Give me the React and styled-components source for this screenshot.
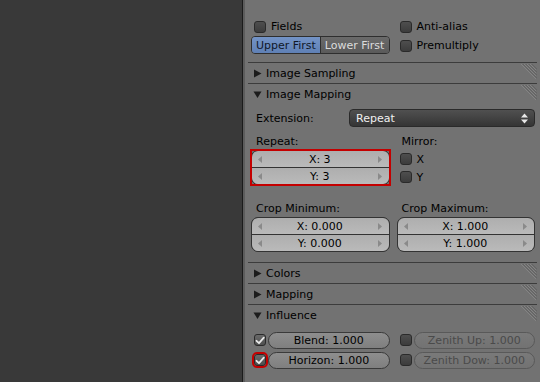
import React from 'react';
import styled, { createGlobalStyle, css } from 'styled-components';

const Global = createGlobalStyle`
  html, body { margin: 0; padding: 0; background: #393939; }
  body {
    font-family: "DejaVu Sans", "Liberation Sans", sans-serif;
    font-size: 11px;
    color: #000;
  }
`;

const Page = styled.div`
  display: flex;
  width: 540px;
  height: 382px;
  overflow: hidden;
`;

const SideArea = styled.div`
  flex: none;
  width: 242px;
  background: #393939;
`;

const Divider = styled.div`
  flex: none;
  width: 3px;
  box-sizing: border-box;
  border-left: 1px solid #1b1b1b;
  background: #5c5c5c;
`;

const Panel = styled.div`
  flex: 1;
  display: flex;
  flex-direction: column;
  background: #727272;
  overflow: hidden;
`;

const TwoCol = styled.div`
  display: grid;
  grid-template-columns: 1fr 1fr;
  column-gap: 7px;
  padding: ${p => p.$pad || '0 5px 0 6px'};
`;

const Col = styled.div`
  display: flex;
  flex-direction: column;
`;

const CheckRow = styled.div`
  display: flex;
  align-items: center;
  gap: 5px;
  height: ${p => p.$h || 19}px;
  padding-left: 3px;
`;

const Box = styled.span`
  position: relative;
  flex: none;
  box-sizing: border-box;
  width: 12px;
  height: 12px;
  border-radius: 3px;
  border: 1px solid #2a2a2a;
  background: ${p => (p.$checked ? 'linear-gradient(#6a6a6a, #4f4f4f)' : 'linear-gradient(#4e4e4e, #3c3c3c)')};
  display: flex;
  align-items: center;
  justify-content: center;
  ${p => p.$marked && css`
    outline: 2px solid #c40000;
    outline-offset: 0px;
  `}
`;

const Text = styled.span`
  white-space: nowrap;
  color: #000;
`;

const Segmented = styled.div`
  display: flex;
  height: 18px;
  box-sizing: border-box;
  border: 1px solid #2e2e2e;
  border-radius: 4px;
  overflow: hidden;
`;

const SegButton = styled.div`
  flex: 1;
  display: flex;
  align-items: center;
  justify-content: center;
  white-space: nowrap;
  background: ${p => (p.$active ? 'linear-gradient(#7393c6, #5f80b5)' : 'linear-gradient(#6a6a6a, #5a5a5a)')};
  color: ${p => (p.$active ? '#101828' : '#dcdcdc')};
  & + & { border-left: 1px solid #2e2e2e; }
`;

const Header = styled.div`
  flex: none;
  display: flex;
  align-items: center;
  height: 20px;
  margin: 0 3px;
  padding-left: 5px;
  border-top: 1px solid #3c3c3c;
  gap: 4px;
`;

const HeaderTitle = styled.span`
  flex: 1;
  font-size: 11px;
  color: #000;
`;

const Body = styled.div`
  display: flex;
  flex-direction: column;
  padding: ${p => p.$pad || '0'};
`;

const FieldLine = styled.div`
  display: flex;
  align-items: center;
  height: 18px;
  padding: 0 5px 0 6px;
`;

const LabelText = styled.span`
  flex: 1;
  padding-left: 5px;
  color: #000;
  white-space: nowrap;
`;

const Dropdown = styled.div`
  flex: none;
  width: 186px;
  height: 18px;
  box-sizing: border-box;
  border: 1px solid #2a2a2a;
  border-radius: 4px;
  background: linear-gradient(#505050, #353535);
  color: #f0f0f0;
  display: flex;
  align-items: center;
  padding: 0 6px;
  justify-content: space-between;
`;

const ColLabel = styled.div`
  height: ${p => p.$h || 18}px;
  display: flex;
  align-items: center;
  padding-left: 5px;
  white-space: nowrap;
`;

const Marker = styled.div`
  ${p => p.$marked && css`
    outline: 2px solid #c40000;
    outline-offset: -1px;
  `}
`;

const NumStack = styled.div`
  display: flex;
  flex-direction: column;
  box-sizing: border-box;
  border: 1px solid #333;
  border-radius: 7px;
  overflow: hidden;
  background: #333;
  gap: 1px;
`;

const NumField = styled.div`
  height: 16px;
  display: flex;
  align-items: center;
  justify-content: space-between;
  padding: 0 7px 0 6px;
  background: linear-gradient(#aeaeae, #bababa);
  color: #000;
`;

const NumValue = styled.span`
  flex: 1;
  text-align: center;
`;

const ToggleRow = styled.div`
  display: flex;
  align-items: center;
  height: 20px;
  gap: 2px;
  padding-left: 3px;
`;

const Pill = styled.div`
  flex: 1;
  height: 17px;
  box-sizing: border-box;
  border-radius: 9px;
  display: flex;
  align-items: center;
  justify-content: center;
  white-space: nowrap;
  ${p => p.$disabled ? css`
    border: 1px solid #595959;
    background: linear-gradient(#7a7a7a, #727272);
    color: #4a4a4a;
  ` : css`
    border: 1px solid #3a3a3a;
    background: linear-gradient(#8e8e8e, #7f7f7f);
    color: #000;
  `}
`;

const Spacer = styled.div`
  flex: none;
  height: ${p => p.$h}px;
`;

const Tick = () => (
  <svg width="10" height="9" viewBox="0 0 10 9">
    <path d="M1.5 4.8 L4 7.2 L8.8 1.6" fill="none" stroke="#e8e8e8" strokeWidth="1.8" strokeLinecap="round" strokeLinejoin="round" />
  </svg>
);

const Tri = ({ open }) => (
  <svg width="9" height="9" viewBox="0 0 9 9" style={{ flex: 'none' }}>
    {open ? <path d="M0.5 1.5 L8.5 1.5 L4.5 8 Z" fill="#1c1c1c" /> : <path d="M1 0.5 L8.5 4.5 L1 8.5 Z" fill="#1c1c1c" />}
  </svg>
);

const Grip = () => (
  <svg width="16" height="16" viewBox="0 0 16 16" style={{ flex: 'none', alignSelf: 'flex-start', marginTop: 1 }}>
    {[0, 3, 6, 9].map(o => (
      <g key={o}>
        <line x1={o + 0.5} y1="0" x2="15.5" y2={15 - o} stroke="#969696" strokeWidth="1" />
        <line x1={o + 1.5} y1="0" x2="16.5" y2={15 - o} stroke="#565656" strokeWidth="1" />
      </g>
    ))}
  </svg>
);

const ArrowL = () => (
  <svg width="4" height="7" viewBox="0 0 4 7"><path d="M4 0 L0 3.5 L4 7 Z" fill="#8a8a8a" /></svg>
);
const ArrowR = () => (
  <svg width="4" height="7" viewBox="0 0 4 7"><path d="M0 0 L4 3.5 L0 7 Z" fill="#8a8a8a" /></svg>
);

const UpDown = () => (
  <svg width="7" height="11" viewBox="0 0 7 11">
    <path d="M0 4.5 L3.5 0.5 L7 4.5 Z" fill="#e8e8e8" />
    <path d="M0 6.5 L3.5 10.5 L7 6.5 Z" fill="#e8e8e8" />
  </svg>
);

const Check = ({ checked, marked, label }) => (
  <CheckRow>
    <Box $checked={checked} $marked={marked}>{checked && <Tick />}</Box>
    {label && <Text>{label}</Text>}
  </CheckRow>
);

const Num = ({ text }) => (
  <NumField>
    <ArrowL />
    <NumValue>{text}</NumValue>
    <ArrowR />
  </NumField>
);

const Section = ({ title, open }) => (
  <Header>
    <Tri open={open} />
    <HeaderTitle>{title}</HeaderTitle>
    <Grip />
  </Header>
);

const Toggle = ({ checked, marked, label, disabled }) => (
  <ToggleRow>
    <Box $checked={checked} $marked={marked}>{checked && <Tick />}</Box>
    <Pill $disabled={disabled}>{label}</Pill>
  </ToggleRow>
);

export default function App() {
  return (
    <Page>
      <Global />
      <SideArea />
      <Divider />
      <Panel>
        <Spacer $h={17} />
        <TwoCol>
          <Col>
            <Check label="Fields" />
            <Segmented>
              <SegButton $active>Upper First</SegButton>
              <SegButton>Lower First</SegButton>
            </Segmented>
          </Col>
          <Col>
            <Check label="Anti-alias" />
            <Check label="Premultiply" />
          </Col>
        </TwoCol>
        <Spacer $h={7} />
        <Section title="Image Sampling" />
        <Section title="Image Mapping" open />
        <Body $pad="5px 0 10px 0">
          <FieldLine>
            <LabelText>Extension:</LabelText>
            <Dropdown>
              <span>Repeat</span>
              <UpDown />
            </Dropdown>
          </FieldLine>
          <Spacer $h={5} />
          <TwoCol>
            <Col>
              <ColLabel>Repeat:</ColLabel>
              <Marker $marked>
                <NumStack>
                  <Num text="X: 3" />
                  <Num text="Y: 3" />
                </NumStack>
              </Marker>
            </Col>
            <Col>
              <ColLabel>Mirror:</ColLabel>
              <CheckRow $h={18}><Box /><Text>X</Text></CheckRow>
              <CheckRow $h={18}><Box /><Text>Y</Text></CheckRow>
            </Col>
          </TwoCol>
          <Spacer $h={14} />
          <TwoCol>
            <Col>
              <ColLabel $h={17}>Crop Minimum:</ColLabel>
              <NumStack>
                <Num text="X: 0.000" />
                <Num text="Y: 0.000" />
              </NumStack>
            </Col>
            <Col>
              <ColLabel $h={17}>Crop Maximum:</ColLabel>
              <NumStack>
                <Num text="X: 1.000" />
                <Num text="Y: 1.000" />
              </NumStack>
            </Col>
          </TwoCol>
        </Body>
        <Section title="Colors" />
        <Section title="Mapping" />
        <Section title="Influence" open />
        <Body $pad="5px 0 0 0">
          <TwoCol>
            <Col>
              <Toggle checked label="Blend: 1.000" />
              <Toggle checked marked label="Horizon: 1.000" />
            </Col>
            <Col>
              <Toggle disabled label="Zenith Up: 1.000" />
              <Toggle disabled label="Zenith Dow: 1.000" />
            </Col>
          </TwoCol>
        </Body>
      </Panel>
    </Page>
  );
}
